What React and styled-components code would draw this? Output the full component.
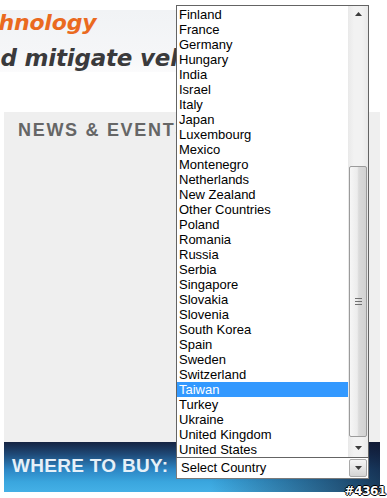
import React from 'react';
import styled, { createGlobalStyle } from 'styled-components';

const countries = [
  'Finland', 'France', 'Germany', 'Hungary', 'India', 'Israel', 'Italy', 'Japan',
  'Luxembourg', 'Mexico', 'Montenegro', 'Netherlands', 'New Zealand', 'Other Countries',
  'Poland', 'Romania', 'Russia', 'Serbia', 'Singapore', 'Slovakia', 'Slovenia',
  'South Korea', 'Spain', 'Sweden', 'Switzerland', 'Taiwan', 'Turkey', 'Ukraine',
  'United Kingdom', 'United States'
];

const GlobalStyle = createGlobalStyle`
  html, body {
    margin: 0;
    padding: 0;
    background: #fff;
  }
`;

const Page = styled.div`
  position: relative;
  width: 387px;
  height: 498px;
  overflow: hidden;
  background: #fff;
  font-family: "Liberation Sans", Arial, sans-serif;
`;

const Header = styled.div`
  height: 112px;
  padding-top: 10px;
  box-sizing: border-box;
  overflow: hidden;
`;

const Band = styled.div`
  height: 62px;
  width: 200px;
  background: linear-gradient(180deg, #f1f3f5 0%, #f5f6f8 70%, #fbfbfc 100%);
  overflow: hidden;
  white-space: nowrap;
`;

const Slogan = styled.div`
  font-family: "DejaVu Sans", sans-serif;
  font-weight: bold;
  font-style: italic;
  font-size: ${p => p.size}px;
  line-height: ${p => p.lh}px;
  color: ${p => p.color};
  margin-left: ${p => p.shift}px;
  margin-top: ${p => p.gap || 0}px;
  letter-spacing: -0.2px;
`;

const Panel = styled.div`
  height: 330px;
  margin: 0 7px 0 4px;
  background: #efefef;
  padding: 7px 0 0 14px;
  box-sizing: border-box;
`;

const PanelTitle = styled.h2`
  margin: 0;
  font-family: "Liberation Sans", Arial, sans-serif;
  font-weight: bold;
  font-size: 18px;
  line-height: 22px;
  letter-spacing: 1.7px;
  color: #666;
  white-space: nowrap;
`;

const BuyBar = styled.div`
  height: 50px;
  margin: 0 7px 0 4px;
  padding: 0 11px 0 8px;
  box-sizing: border-box;
  display: flex;
  align-items: center;
  justify-content: space-between;
  background:
    linear-gradient(90deg, rgba(14, 22, 48, 0) 0%, rgba(14, 22, 48, 0) 55%, rgba(14, 22, 48, 0.75) 100%),
    linear-gradient(180deg, #162442 0%, #1f4a78 25%, #2d86c4 55%, #3aa6de 80%, #44b0e6 100%);
`;

const BuyLabel = styled.span`
  font-family: "Liberation Sans", Arial, sans-serif;
  font-weight: bold;
  font-size: 19px;
  letter-spacing: 0.3px;
  color: #e6f0f8;
  margin-top: -2px;
  white-space: nowrap;
`;

const SelectWrap = styled.div`
  position: relative;
  width: 193px;
  height: 22px;
  margin-top: 1px;
  box-sizing: border-box;
  border: 1px solid #7a7a7a;
  background: #fff;
  display: flex;
  align-items: center;
  justify-content: space-between;
  padding: 0 1px 0 4px;
`;

const SelectText = styled.span`
  font-size: 13px;
  color: #000;
`;

const DropButton = styled.div`
  width: 18px;
  height: 18px;
  box-sizing: border-box;
  border: 1px solid #a9a9a9;
  border-radius: 2px;
  background: linear-gradient(180deg, #f6f6f6 0%, #e6e6e6 50%, #d4d4d4 100%);
  display: flex;
  align-items: center;
  justify-content: center;
`;

const Popup = styled.div`
  position: absolute;
  left: -1px;
  bottom: 100%;
  width: 193px;
  height: 453px;
  box-sizing: border-box;
  border: 1px solid #646464;
  background: #fff;
  display: flex;
`;

const Options = styled.ul`
  list-style: none;
  margin: 0;
  padding: 1px 0 0 0;
  width: 171px;
`;

const Option = styled.li`
  height: 15px;
  line-height: 15px;
  padding-left: 2px;
  font-size: 13px;
  color: ${p => (p.active ? '#fff' : '#000')};
  background: ${p => (p.active ? '#3399ff' : 'transparent')};
  white-space: nowrap;
`;

const Scrollbar = styled.div`
  width: 20px;
  display: flex;
  flex-direction: column;
  background: linear-gradient(90deg, #e9e9e9 0%, #f2f2f2 30%, #f2f2f2 70%, #e9e9e9 100%);
`;

const ArrowBtn = styled.div`
  height: 17px;
  display: flex;
  align-items: center;
  justify-content: center;
`;

const Track = styled.div`
  flex: 1;
  padding: 0 1px;
`;

const Thumb = styled.div`
  margin-top: 143px;
  height: 271px;
  box-sizing: border-box;
  border: 1px solid #9b9b9b;
  border-radius: 2px;
  background: linear-gradient(90deg, #f6f6f6 0%, #ececec 45%, #dadada 55%, #d2d2d2 100%);
  display: flex;
  align-items: center;
  justify-content: center;
`;

const Tag = styled.div`
  position: absolute;
  right: 1px;
  bottom: 1px;
  font-family: "DejaVu Sans", sans-serif;
  font-weight: bold;
  font-size: 12px;
  line-height: 12px;
  letter-spacing: -0.4px;
  color: #fff;
  text-shadow: 1px 0 0 #000, -1px 0 0 #000, 0 1px 0 #000, 0 -1px 0 #000;
`;

const Triangle = ({ up }) => (
  <svg width="7" height="4" viewBox="0 0 7 4">
    <path d={up ? 'M0 4 L3.5 0 L7 4 Z' : 'M0 0 L7 0 L3.5 4 Z'} fill="#3c3c3c" />
  </svg>
);

const Gripper = () => (
  <svg width="7" height="7" viewBox="0 0 7 7">
    <rect x="0" y="0" width="7" height="1" fill="#707070" />
    <rect x="0" y="3" width="7" height="1" fill="#707070" />
    <rect x="0" y="6" width="7" height="1" fill="#707070" />
  </svg>
);

export default function App() {
  return (
    <Page>
      <GlobalStyle />
      <Header>
        <Band>
          <Slogan size={22} lh={26} color="#ea6a1f" shift={-41}>Technology</Slogan>
          <Slogan size={23} lh={30} gap={7} color="#3a3a3c" shift={-31}>and mitigate vehicle</Slogan>
        </Band>
      </Header>
      <Panel>
        <PanelTitle>NEWS &amp; EVENTS</PanelTitle>
      </Panel>
      <BuyBar>
        <BuyLabel>WHERE TO BUY:</BuyLabel>
        <SelectWrap>
          <SelectText>Select Country</SelectText>
          <DropButton>
            <Triangle />
          </DropButton>
          <Popup>
            <Options>
              {countries.map(c => (
                <Option key={c} active={c === 'Taiwan'}>{c}</Option>
              ))}
            </Options>
            <Scrollbar>
              <ArrowBtn><Triangle up /></ArrowBtn>
              <Track>
                <Thumb><Gripper /></Thumb>
              </Track>
              <ArrowBtn><Triangle /></ArrowBtn>
            </Scrollbar>
          </Popup>
        </SelectWrap>
      </BuyBar>
      <Tag>#4361</Tag>
    </Page>
  );
}
